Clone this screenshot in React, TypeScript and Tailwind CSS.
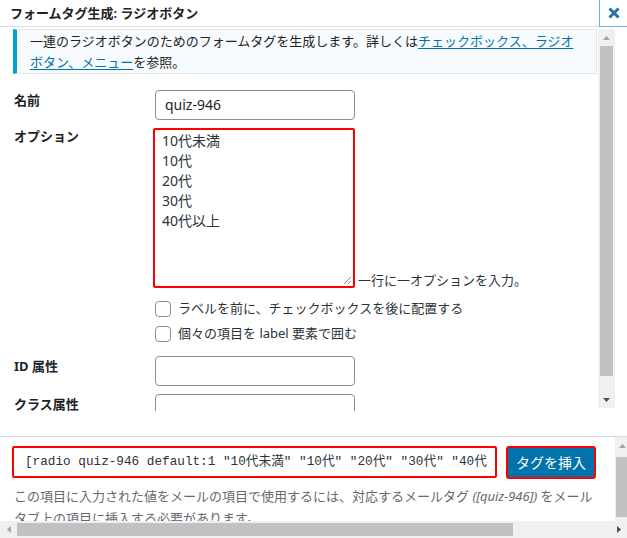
import React from "react";

function UpArrow({ dark }: { dark?: boolean }) {
  return (
    <svg width="7" height="4" viewBox="0 0 7 4">
      <polygon points="0,4 7,4 3.5,0" fill={dark ? "#505050" : "#a3a3a3"} />
    </svg>
  );
}
function DownArrow({ dark }: { dark?: boolean }) {
  return (
    <svg width="7" height="4" viewBox="0 0 7 4">
      <polygon points="0,0 7,0 3.5,4" fill={dark ? "#505050" : "#a3a3a3"} />
    </svg>
  );
}
function LeftArrow({ dark }: { dark?: boolean }) {
  return (
    <svg width="4" height="7" viewBox="0 0 4 7">
      <polygon points="4,0 4,7 0,3.5" fill={dark ? "#505050" : "#a3a3a3"} />
    </svg>
  );
}
function RightArrow({ dark }: { dark?: boolean }) {
  return (
    <svg width="4" height="7" viewBox="0 0 4 7">
      <polygon points="0,0 0,7 4,3.5" fill={dark ? "#505050" : "#a3a3a3"} />
    </svg>
  );
}

function Checkbox() {
  return <div className="w-[16px] h-[16px] rounded-[4px] border border-[#8c8f94] bg-white shrink-0" />;
}

export default function App() {
  return (
    <div className="relative w-[627px] h-[538px] bg-white overflow-hidden text-[#1d2327] font-['Noto_Sans','Noto_Sans_CJK_JP',sans-serif] text-[13px]">
      {/* header */}
      <div className="flex h-[27px]">
        <div className="flex-1 h-[27px] border-b border-[#dcdcde] pl-[10px] text-[13px] font-semibold leading-[26px]">
          フォームタグ生成: ラジオボタン
        </div>
        <div className="w-[28px] h-[27px] border-l border-b border-[#72aee6] flex items-center justify-center">
          <svg width="12" height="12" viewBox="0 0 12 12">
            <path d="M1.5 1.5 L10.5 10.5 M10.5 1.5 L1.5 10.5" stroke="#2271b1" strokeWidth="3" strokeLinecap="butt" />
          </svg>
        </div>
      </div>

      {/* scroll panel */}
      <div className="flex h-[384px] pt-[2px]">
        <div className="w-[598px] h-[382px] overflow-hidden">
          <div className="ml-[13px] mr-[1px] h-[45px] border border-[#e2e4e7] border-l-4 border-l-[#00a0d2] bg-[#f7fbfd] pl-[13px] pr-[10px] pt-[1px] leading-[21px]">
            一連のラジオボタンのためのフォームタグを生成します。詳しくは
            <span className="text-[#0073aa] underline underline-offset-2">チェックボックス、ラジオボタン、メニュー</span>
            を参照。
          </div>

          {/* 名前 */}
          <div className="flex mt-[16px]">
            <div className="w-[155px] pl-[14px] pt-[1px] font-bold leading-[18px]">名前</div>
            <div className="w-[200px] h-[30px] rounded-[4px] border border-[#8c8f94] pl-[9px] text-[14px] leading-[27px]">
              quiz-946
            </div>
          </div>

          {/* オプション */}
          <div className="flex mt-[8px]">
            <div className="w-[153px] pl-[14px] font-bold leading-[18px] -mt-px">オプション</div>
            <div className="flex flex-col">
              <div className="flex items-end">
                <div className="relative w-[202px] h-[160px] border-2 border-[#ff0000] rounded-[2px] pl-[7px] pt-[1px] text-[14px] leading-[20px] text-[#2c3338]">
                  <div>10代未満</div>
                  <div>10代</div>
                  <div>20代</div>
                  <div>30代</div>
                  <div>40代以上</div>
                  <svg className="absolute right-[1px] bottom-[1px]" width="9" height="9" viewBox="0 0 9 9">
                    <path d="M8 1 L1 8 M8 5 L5 8" stroke="#8c8f94" strokeWidth="1" />
                  </svg>
                </div>
                <div className="ml-[3px] leading-[18px] -mb-[1px] text-[#2c3338]">一行に一オプションを入力。</div>
              </div>
              <div className="flex items-center mt-[12px] ml-[2px] h-[17px]">
                <Checkbox />
                <span className="ml-[7px] text-[#2c3338] leading-[17px]">ラベルを前に、チェックボックスを後に配置する</span>
              </div>
              <div className="flex items-center mt-[8px] ml-[2px] h-[17px]">
                <Checkbox />
                <span className="ml-[7px] text-[#2c3338] leading-[17px]">個々の項目を label 要素で囲む</span>
              </div>
            </div>
          </div>

          {/* ID */}
          <div className="flex mt-[14px]">
            <div className="w-[155px] pl-[14px] font-bold leading-[18px] pt-[1px]">ID 属性</div>
            <div className="w-[200px] h-[30px] rounded-[4px] border border-[#8c8f94]" />
          </div>
          {/* class */}
          <div className="flex mt-[8px]">
            <div className="w-[155px] pl-[14px] font-bold leading-[18px] pt-[1px]">クラス属性</div>
            <div className="w-[200px] h-[30px] rounded-[4px] border border-[#8c8f94]" />
          </div>
        </div>

        {/* vertical scrollbar */}
        <div className="w-[17px] h-[379px] bg-[#f0f0f0] flex flex-col">
          <div className="h-[17px] flex items-center justify-center">
            <UpArrow />
          </div>
          <div className="mx-[2px] h-[330px] bg-[#c1c1c1]" />
          <div className="flex-1" />
          <div className="h-[17px] flex items-center justify-center">
            <DownArrow dark />
          </div>
        </div>
      </div>

      {/* gap + footer */}
      <div className="h-[25px]" />
      <div className="border-t border-[#dcdcde] flex h-[85px]">
        <div className="w-[615px] overflow-hidden">
          <div className="flex items-start mt-[9px] ml-[12px]">
            <div className="w-[485px] h-[32px] border-2 border-[#ff0000] rounded-[2px] pl-[11px] font-['Liberation_Mono','Noto_Sans_CJK_JP',monospace] text-[12.7px] leading-[28px] text-[#2c3338]">
              <div className="w-[462px] whitespace-nowrap overflow-hidden">
                [radio quiz-946 default:1 "10代未満" "10代" "20代" "30代" "40代以上"]
              </div>
            </div>
            <div className="ml-[9px] w-[90px] h-[33px] border-2 border-[#ff0000] rounded-[3px] bg-[#0073aa] text-white text-[14px] flex items-center justify-center">
              タグを挿入
            </div>
          </div>
          <div className="ml-[14px] mt-[6px] pr-[14px] leading-[22px] text-[#646970]">
            この項目に入力された値をメールの項目で使用するには、対応するメールタグ <i>([quiz-946])</i> をメールタブ上の項目に挿入する必要があります。
          </div>
        </div>
        <div className="w-[12px] bg-[#f0f0f0] flex flex-col">
          <div className="h-[17px] flex items-center justify-center pl-[3px]">
            <UpArrow />
          </div>
          <div className="mt-[3px] h-[60px] ml-[1px] bg-[#c1c1c1]" />
        </div>
      </div>

      {/* horizontal scrollbar */}
      <div className="h-[17px] bg-[#f0f0f0] flex items-center">
        <div className="w-[17px] h-[17px] flex items-center justify-center">
          <LeftArrow />
        </div>
        <div className="w-[496px] h-[13px] bg-[#c1c1c1]" />
        <div className="flex-1" />
        <div className="w-[17px] h-[17px] flex items-center justify-center">
          <RightArrow dark />
        </div>
      </div>
    </div>
  );
}
